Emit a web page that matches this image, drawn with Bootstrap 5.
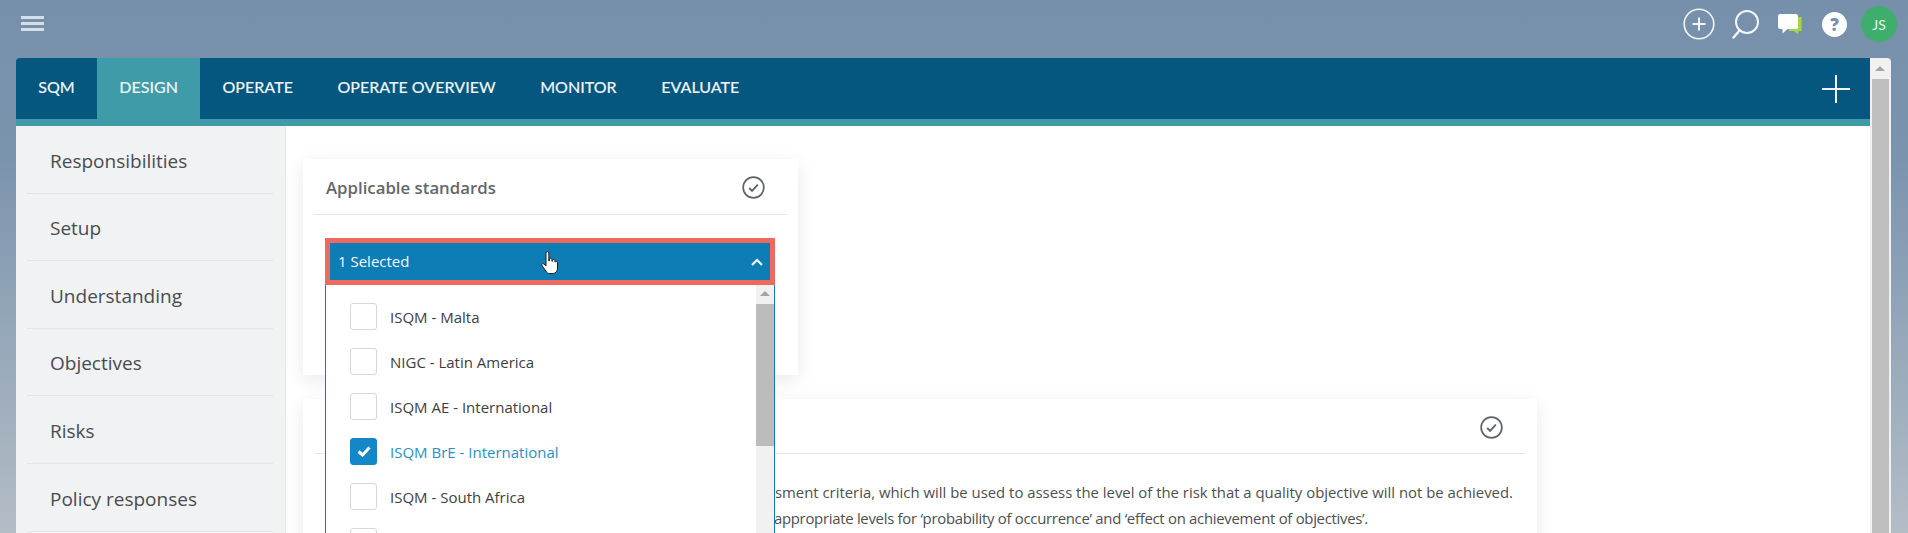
<!DOCTYPE html>
<html lang="en">
<head>
  <meta charset="UTF-8" />
  <meta name="viewport" content="width=device-width, initial-scale=1.0"/>
  <title>SQM Design</title>
  <link href="https://cdn.jsdelivr.net/npm/bootstrap@5.3.2/dist/css/bootstrap.min.css" rel="stylesheet">
  <style>
    html, body {
      height: 100%;
      overflow: hidden;
    }

    body {
      background: linear-gradient(180deg, #7690ab 0%, #7b94ae 30%, #b3bdc6 100%);
      font-family: "Open Sans", "Liberation Sans", sans-serif;
    }

    .top-strip {
      height: 58px;
      padding: 0 11px 0 21px;
    }

    .burger {
      width: 23px;
      height: 15px;
      border-top: 3px solid #d5dfea;
      border-bottom: 3px solid #d5dfea;
      position: relative;
      margin-top: -12px;
    }

    .burger::after {
      content: "";
      position: absolute;
      left: 0;
      right: 0;
      top: 3px;
      height: 3px;
      background: #d5dfea;
    }

    .top-icons {
      margin-top: -10px;
    }

    .icon-search { margin-left: 17px; }
    .icon-chat { margin-left: 19px; }
    .icon-help { margin-left: 20px; }
    .avatar {
      width: 36px;
      height: 36px;
      margin-left: 14px;
      background: #3fae6c;
      color: #e8f6ee;
      font-size: 14px;
      font-family: "Lato", sans-serif;
    }

    .app-frame {
      margin-left: 16px;
      margin-right: 18px;
    }

    .app-main {
      width: 1854px;
      flex: none;
    }

    .tab-bar {
      height: 68px;
      background: #05577f;
      border-bottom: 7px solid #3f9ba8;
      border-radius: 4px 0 0 0;
      padding-right: 20px;
      font-family: "Lato", sans-serif;
    }

    .tab-item {
      color: #eef5f8;
      font-size: 16px;
      font-weight: 500;
      padding: 0 22.3px;
      line-height: 57px;
      height: 61px;
      text-decoration: none;
      -webkit-text-stroke: 0.1px #eef5f8;
    }

    .tab-item.tab-on {
      background: #3f9ba8;
    }

    .work-area {
      height: 407px;
      background: #fff;
      overflow: hidden;
    }

    .side-menu {
      width: 270px;
      flex: none;
      background: #f1f2f4;
      border-right: 1px solid #e6e7e9;
      padding: 0 12px 0 11px;
    }

    .side-link {
      height: 67.6px;
      padding: 3px 0 0 23px;
      color: #484c50;
      font-size: 19px;
      border-bottom: 1px solid #e3e4e6;
    }

    .content-pane {
      padding: 33px 0 0 17px;
      position: relative;
    }

    .std-card {
      width: 495px;
      height: 216px;
      background: #fff;
      box-shadow: 0 5px 18px rgba(0, 0, 0, 0.09);
      padding: 0 11px;
    }

    .std-card-wide {
      width: 1234px;
      height: 220px;
      margin-top: 24px;
      background: #fff;
      box-shadow: 0 5px 18px rgba(0, 0, 0, 0.09);
      padding: 0 12px;
    }

    .std-head {
      height: 56px;
      border-bottom: 1px solid #e5e6e8;
      padding: 2px 22px 0 12px;
      font-size: 16.8px;
      font-weight: 600;
      color: #63676b;
    }

    .std-head-wide {
      height: 55px;
    }

    .std-body {
      padding: 25px 12px 0 0;
      font-size: 14.9px;
      line-height: 26px;
      color: #4d4f52;
      text-align: right;
      white-space: nowrap;
    }

    .std-line-two {
      padding-right: 145px;
      letter-spacing: -0.28px;
    }

    .pick-box {
      position: absolute;
      left: 39px;
      top: 112px;
      width: 450px;
      z-index: 5;
    }

    .pick-toggle {
      height: 47px;
      background: #0f7db5;
      border: 5px solid #ec6a5e;
      color: #f2f8fc;
      font-size: 15px;
      padding: 0 7px 0 8px;
    }

    .pick-panel {
      height: 248px;
      background: #fff;
      border: 1px solid #0f7db5;
      border-top: 0;
      border-bottom: 0;
      padding-left: 24px;
    }

    .pick-list {
      padding-top: 18px;
      gap: 18px;
    }

    .pick-row {
      height: 27px;
      gap: 13px;
      font-size: 15px;
      color: #3d4043;
    }

    .pick-row.pick-on {
      color: #2a8fc6;
    }

    .pick-label {
      margin-top: 2px;
    }

    .tick-box {
      width: 27px;
      height: 27px;
      border: 1px solid #d6d7d9;
      border-radius: 3px;
      flex: none;
    }

    .pick-on .tick-box {
      background: #1487c8;
      border-color: #1487c8;
    }

    .pick-scroll {
      position: absolute;
      right: 1px;
      top: 47px;
      width: 18px;
      height: 248px;
      background: #f1f1f1;
    }

    .pick-scroll .thumb-bar {
      position: absolute;
      left: 0;
      right: 0;
      top: 19px;
      height: 142px;
      background: #bcbcbc;
    }

    .arrow-up {
      position: absolute;
      left: 4px;
      top: 6px;
      border-left: 5px solid transparent;
      border-right: 5px solid transparent;
      border-bottom: 5px solid #a5a5a5;
    }

    .page-scroll {
      width: 21px;
      flex: none;
      background: #f1f1f1;
      position: relative;
      border-radius: 0 4px 0 0;
    }

    .page-scroll .thumb-bar {
      position: absolute;
      left: 2px;
      right: 2px;
      top: 21px;
      bottom: 0;
      background: #bfbfbf;
    }

    .page-scroll .arrow-up {
      left: 5px;
      top: 8px;
    }

    .hand-cursor {
      position: absolute;
      left: 541px;
      top: 251px;
      z-index: 6;
    }
  </style>
</head>
<body>
  <div class="top-strip d-flex align-items-center justify-content-between">
    <div class="burger"></div>
    <div class="top-icons d-flex align-items-center">
      <svg width="32" height="32" viewBox="0 0 32 32" fill="none" stroke="#f3f6f9" stroke-width="1.6"><circle cx="16" cy="16" r="14.8"/><path stroke-width="2" d="M16 9.500v13M9.500 16h13"/></svg>
      <svg class="icon-search" width="27" height="30" viewBox="0 0 27 30" fill="none" stroke="#f3f6f9" stroke-width="2"><circle cx="15" cy="13" r="11"/><path stroke-width="2.400" stroke-linecap="round" d="M7.500 21.500 1.500 28.500"/></svg>
      <svg class="icon-chat" width="24" height="21" viewBox="0 0 24 21"><path fill="#a5d64a" d="M11 3h12.500v14h-3l-.5 3.500-4-3.500h-5z"/><path fill="#fff" d="M2 0h16a2 2 0 0 1 2 2v11a2 2 0 0 1-2 2H9.500L4.500 19.500V15H2a2 2 0 0 1-2-2V2a2 2 0 0 1 2-2z"/></svg>
      <svg class="icon-help" width="25" height="25" viewBox="0 0 25 25"><circle cx="12.500" cy="12.500" r="12.500" fill="#fff"/><text x="12.500" y="18.500" text-anchor="middle" font-family="Open Sans" font-weight="800" font-size="17" fill="#7690ab">?</text></svg>
      <div class="avatar rounded-circle d-flex align-items-center justify-content-center">JS</div>
    </div>
  </div>

  <div class="app-frame d-flex">
    <div class="app-main">
      <div class="tab-bar d-flex justify-content-between">
        <div class="d-flex">
          <a class="tab-item" href="#">SQM</a>
          <a class="tab-item tab-on" href="#">DESIGN</a>
          <a class="tab-item" href="#">OPERATE</a>
          <a class="tab-item" href="#">OPERATE OVERVIEW</a>
          <a class="tab-item" href="#">MONITOR</a>
          <a class="tab-item" href="#">EVALUATE</a>
        </div>
        <svg class="align-self-center" width="28" height="28" viewBox="0 0 28 28" stroke="#eef5f8" stroke-width="2"><path d="M14 0v28M0 14h28"/></svg>
      </div>

      <div class="work-area d-flex">
        <div class="side-menu">
          <div class="side-link d-flex align-items-center">Responsibilities</div>
          <div class="side-link d-flex align-items-center">Setup</div>
          <div class="side-link d-flex align-items-center">Understanding</div>
          <div class="side-link d-flex align-items-center">Objectives</div>
          <div class="side-link d-flex align-items-center">Risks</div>
          <div class="side-link d-flex align-items-center">Policy responses</div>
        </div>

        <div class="content-pane flex-grow-1">
          <div class="std-card">
            <div class="std-head d-flex align-items-center justify-content-between">
              <span>Applicable standards</span>
              <svg width="23" height="23" viewBox="0 0 24 24" fill="none" stroke="#606468" stroke-width="1.800"><circle cx="12" cy="12" r="10.800"/><path stroke-width="2" d="M7.500 12.500l3 3 6-6.500"/></svg>
            </div>
          </div>

          <div class="std-card-wide">
            <div class="std-head std-head-wide d-flex align-items-center justify-content-end">
              <svg width="23" height="23" viewBox="0 0 24 24" fill="none" stroke="#606468" stroke-width="1.800"><circle cx="12" cy="12" r="10.800"/><path stroke-width="2" d="M7.500 12.500l3 3 6-6.500"/></svg>
            </div>
            <div class="std-body">
              <div>The firm should establish risk assessment criteria, which will be used to assess the level of the risk that a quality objective will not be achieved.</div>
              <div class="std-line-two">Select the appropriate levels for ‘probability of occurrence’ and ‘effect on achievement of objectives’.</div>
            </div>
          </div>

          <div class="pick-box">
            <div class="pick-toggle d-flex align-items-center justify-content-between">
              <span>1 Selected</span>
              <svg width="12" height="8" viewBox="0 0 12 8" fill="none" stroke="#f2f8fc" stroke-width="2.200"><path d="M1 7l5-5 5 5"/></svg>
            </div>
            <div class="pick-panel overflow-hidden">
              <div class="pick-list d-flex flex-column">
                <div class="pick-row d-flex align-items-center"><span class="tick-box"></span><span class="pick-label">ISQM - Malta</span></div>
                <div class="pick-row d-flex align-items-center"><span class="tick-box"></span><span class="pick-label">NIGC - Latin America</span></div>
                <div class="pick-row d-flex align-items-center"><span class="tick-box"></span><span class="pick-label">ISQM AE - International</span></div>
                <div class="pick-row pick-on d-flex align-items-center"><span class="tick-box d-flex align-items-center justify-content-center"><svg width="14" height="11" viewBox="0 0 14 11" fill="none" stroke="#fff" stroke-width="3"><path d="M1.500 5.500l4 3.500 7-7.500"/></svg></span><span class="pick-label">ISQM BrE - International</span></div>
                <div class="pick-row d-flex align-items-center"><span class="tick-box"></span><span class="pick-label">ISQM - South Africa</span></div>
                <div class="pick-row d-flex align-items-center"><span class="tick-box"></span></div>
              </div>
            </div>
            <div class="pick-scroll"><span class="arrow-up"></span><div class="thumb-bar"></div></div>
          </div>
        </div>
      </div>
    </div>
    <div class="page-scroll"><span class="arrow-up"></span><div class="thumb-bar"></div></div>
  </div>

  <svg class="hand-cursor" width="17" height="24" viewBox="0 0 17 24"><path fill="#fff" stroke="#222" stroke-width="1" d="M5 2a1.400 1.400 0 0 1 2.800 0v8l.6-.1V8.200a1.300 1.300 0 0 1 2.500 0v2l.5.1V9.200a1.300 1.300 0 0 1 2.500 0v1.600l.4.1a1.200 1.200 0 0 1 2.200.6v5.500c0 3-1.600 5.500-4.500 5.500H8.800c-2 0-3-.8-4-2.500L1 14.500c-.8-1.200.8-2.600 2-1.500L5 15z"/></svg>
</body>
</html>
